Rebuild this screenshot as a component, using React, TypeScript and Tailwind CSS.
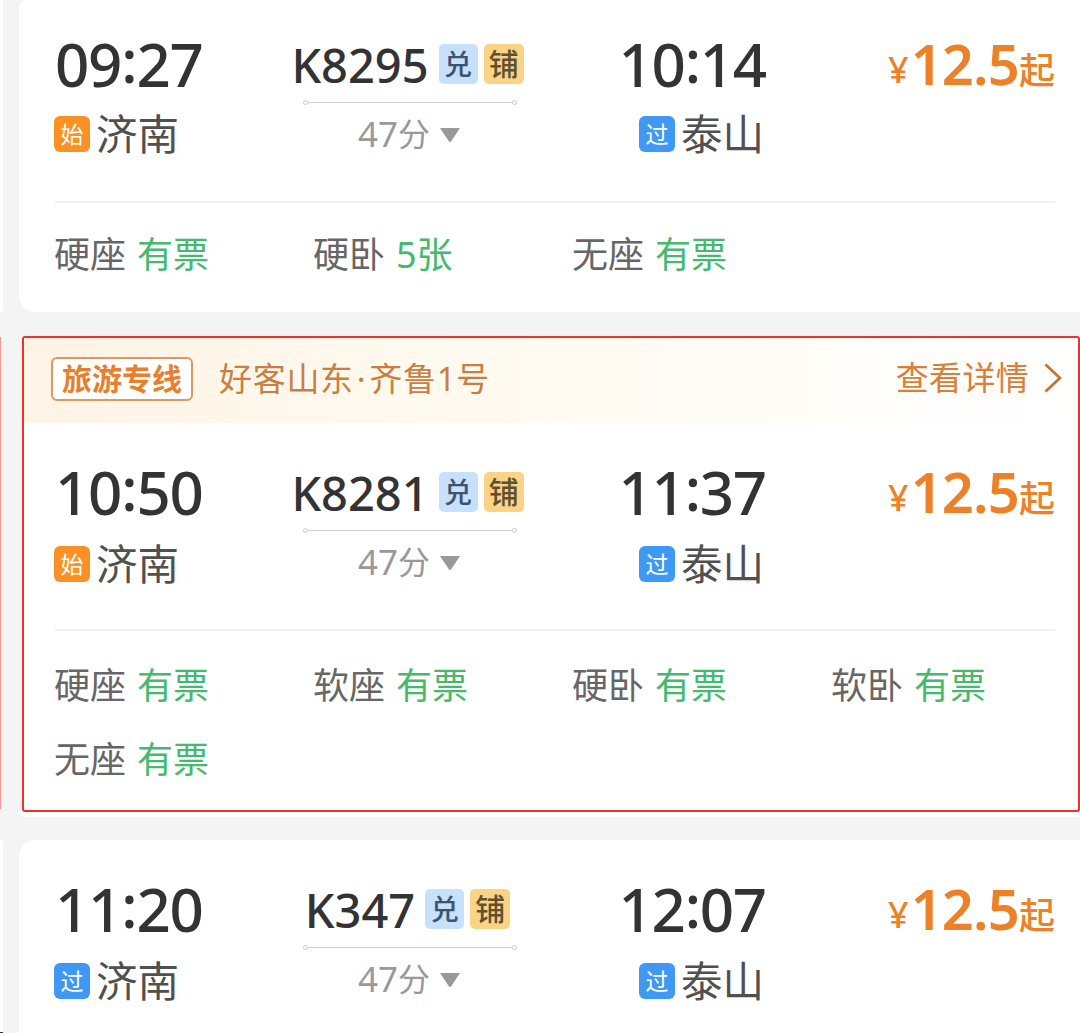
import clsx from "clsx";

type Stop = { time: string; kind: "始" | "过"; station: string };

type Trip = {
  from: Stop;
  to: Stop;
  train: string;
  duration: string;
  price: string;
};

const trips: Trip[] = [
  {
    from: { time: "09:27", kind: "始", station: "济南" },
    to: { time: "10:14", kind: "过", station: "泰山" },
    train: "K8295",
    duration: "47",
    price: "12.5",
  },
  {
    from: { time: "10:50", kind: "始", station: "济南" },
    to: { time: "11:37", kind: "过", station: "泰山" },
    train: "K8281",
    duration: "47",
    price: "12.5",
  },
  {
    from: { time: "11:20", kind: "过", station: "济南" },
    to: { time: "12:07", kind: "过", station: "泰山" },
    train: "K347",
    duration: "47",
    price: "12.5",
  },
];

function StopColumn({ stop, gap, className }: { stop: Stop; gap: string; className?: string }) {
  const [hours, minutes] = stop.time.split(":");
  return (
    <div className={clsx("flex flex-col", className)}>
      <div className="flex h-[60px] text-[60px] leading-[58px] font-medium tracking-[-1.2px] text-[#333]">
        <span>{hours}</span>
        {/* the colon sits centred on the digits */}
        <span className="-mt-[4px]">:</span>
        <span>{minutes}</span>
      </div>
      <div className={clsx("flex h-[42px] items-center gap-[6px]", gap)}>
        <span
          className={clsx(
            "flex size-9 items-center justify-center rounded-[6px] pt-px text-[23px] leading-none text-white",
            stop.kind === "始" ? "bg-[#fa9124]" : "bg-[#3f98f4]"
          )}
        >
          {stop.kind}
        </span>
        <span className="text-[41.5px] leading-[42px] text-[#505050]">{stop.station}</span>
      </div>
    </div>
  );
}

function TripRow({ trip, stopGap = "mt-[18px]" }: { trip: Trip; stopGap?: string }) {
  return (
    <div className="flex h-[122px]">
      <StopColumn stop={trip.from} gap={stopGap} className="w-[225px] items-start [&>*:last-child]:-ml-px" />

      <div className="flex w-[260px] flex-col items-center">
        <div className="flex h-[60px] items-center pr-[5px]">
          <span className="text-[47px] leading-[60px] font-medium text-[#333]">{trip.train}</span>
          <span className="-mt-[2px] ml-[10px] flex h-10 w-[39px] items-center justify-center rounded-[5px] bg-[#c6e0fe] text-[28px] leading-none font-medium text-[#3c556e]">
            兑
          </span>
          <span className="-mt-[2px] ml-[6px] flex h-10 w-10 items-center justify-center rounded-[5px] bg-[#fad384] text-[30px] leading-none font-medium text-[#5f5030]">
            铺
          </span>
        </div>
        <div className="mt-[5px] flex w-[214px] items-center">
          <span className="size-[5px] rounded-full border border-[#ccc]" />
          <span className="h-px flex-1 bg-[#d2d2d2]" />
          <span className="size-[5px] rounded-full border border-[#ccc]" />
        </div>
        <div className="mt-[9px] flex h-[42px] items-center pr-[2px] text-[#999]">
          <span className="-mt-[2px] text-[35px] leading-[42px]">{trip.duration}</span>
          <span className="-mt-[2px] text-[32px] leading-[42px]">分</span>
          <svg className="ml-[10px] h-[14px] w-5" viewBox="0 0 20 14" fill="#999">
            <path d="M0 0H20L11.2 13.2Q10 14.6 8.8 13.2Z" />
          </svg>
        </div>
      </div>

      <StopColumn stop={trip.to} gap={stopGap} className="w-[226px] items-end [&>*:last-child]:mr-[2px]" />

      <div className="-mt-[2px] flex h-[60px] flex-1 items-start justify-end text-[#ec8128]">
        <span className="mr-[2px] text-[36px] leading-[73px] font-medium">¥</span>
        <span className="text-[56px] leading-[60px] font-semibold tracking-[-0.8px]">{trip.price}</span>
        <span className="text-[36px] leading-[76px] font-medium">起</span>
      </div>
    </div>
  );
}

function Seat({ name, left }: { name: string; left: string }) {
  return (
    <div className="flex h-[74px] items-center gap-[11px] text-[36px] leading-[40px]">
      <span className="text-[#666]">{name}</span>
      <span className="text-[#45b96c]">{left}</span>
    </div>
  );
}

function Seats({ seats, className }: { seats: string[][]; className?: string }) {
  return (
    <div className={clsx("-ml-px grid grid-cols-[repeat(4,259px)]", className)}>
      {seats.map(([name, left]) => (
        <Seat key={name} name={name} left={left} />
      ))}
    </div>
  );
}

export default function App() {
  return (
    <div className="flex h-[1033px] w-[1080px] overflow-hidden bg-[#f4f4f4] font-['Noto_Sans','Noto_Sans_CJK_SC',sans-serif] whitespace-nowrap">
      {/* edge of the neighbouring column */}
      <div className="flex w-[3px] flex-col">
        <div className="h-[312px] rounded-br-[3px] bg-white" />
        <div className="mt-[25px] h-[472px] w-px bg-[#f99a94]" />
        <div className="mt-[31px] h-[192px] rounded-tr-[3px] bg-white" />
        <div className="h-px bg-[#333]" />
      </div>

      <main className="ml-4 flex w-[1061px] flex-col">
        <section className="h-[312px] rounded-tl-[8px] rounded-bl-[16px] bg-white pt-[35px] pr-[25px] pl-9">
          <TripRow trip={trips[0]} />
          <hr className="mt-[44px] border-t-2 border-[#f0f0f0]" />
          <Seats
            className="mt-[15px]"
            seats={[
              ["硬座", "有票"],
              ["硬卧", "5张"],
              ["无座", "有票"],
            ]}
          />
        </section>

        <section className="mt-6 h-[481px] pl-[3px]">
          <div className="h-[476px] rounded-[3px] border-2 border-[#f23026] bg-white">
            <div className="flex h-[85px] items-center bg-linear-to-r from-[#fff4e6] via-[#fffaf0] via-45% to-white pr-[16px] pb-[4px] pl-[27px]">
              <span className="flex h-[44px] w-[142px] items-center justify-center rounded-[6px] border-2 border-[#dc9a62] bg-white text-[30px] leading-none font-bold text-[#e97e2c]">
                旅游专线
              </span>
              <span className="ml-[26px] text-[33px] leading-[40px] tracking-[0.7px] text-[#c87f42]">
                好客山东<span className="mx-[3px]">·</span>齐鲁1号
              </span>
              <span className="-mt-[2px] ml-auto text-[33px] leading-[40px] tracking-[0.3px] text-[#d98038]">
                查看详情
              </span>
              <svg
                className="-mt-[2px] ml-[15px] h-[30px] w-[18px]"
                viewBox="0 0 18 30"
                fill="none"
                stroke="#c87430"
                strokeWidth="2.8"
              >
                <path d="M1.5 1.5L16 15L1.5 28.5" />
              </svg>
            </div>
            <div className="pt-[40px] pr-[23px] pl-[31px]">
              <TripRow trip={trips[1]} stopGap="mt-[21px]" />
              <hr className="mt-[44px] border-t-2 border-[#f0f0f0]" />
              <Seats
                className="mt-[18px]"
                seats={[
                  ["硬座", "有票"],
                  ["软座", "有票"],
                  ["硬卧", "有票"],
                  ["软卧", "有票"],
                  ["无座", "有票"],
                ]}
              />
            </div>
          </div>
          <div className="-ml-[3px] h-[5px] rounded-bl-[5px] bg-white" />
        </section>

        <section className="mt-[23px] h-[193px] rounded-tl-[16px] bg-white pt-[40px] pr-[25px] pl-9">
          <TripRow trip={trips[2]} stopGap="mt-[21px]" />
        </section>
      </main>
    </div>
  );
}
